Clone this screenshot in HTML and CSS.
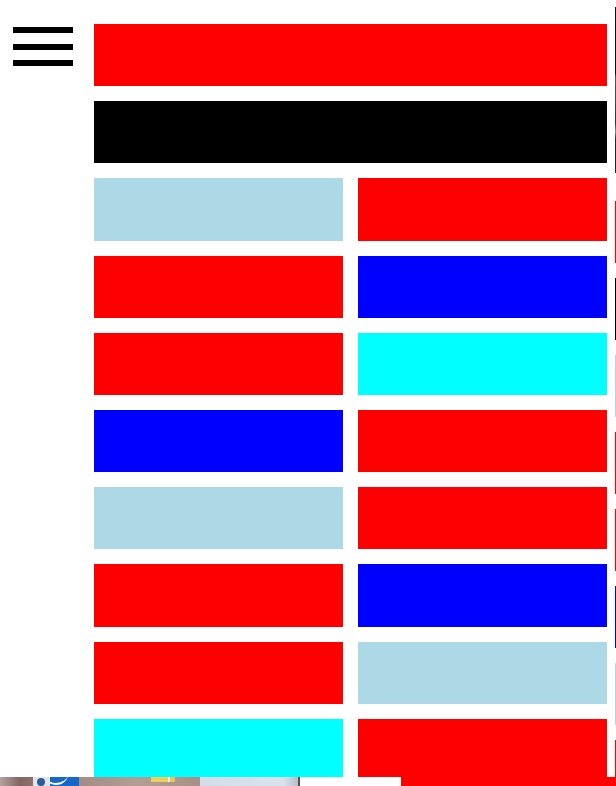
FILE: index.html
```html
<!DOCTYPE html>
<html lang="en">
<head>
    <meta charset="UTF-8">
    <meta name="viewport" content="width=device-width, initial-scale=1.0">
    <title>Blocks</title>
    <link rel="stylesheet" href="styles.css">
</head>
<body>
    <nav class="side">
        <div class="burger">
            <span></span>
            <span></span>
            <span></span>
        </div>
    </nav>

    <main class="content">
        <div class="block red"></div>
        <div class="block black"></div>
        <div class="grid">
            <div class="block lightblue"></div>
            <div class="block red"></div>
            <div class="block red"></div>
            <div class="block blue"></div>
            <div class="block red"></div>
            <div class="block cyan"></div>
            <div class="block blue"></div>
            <div class="block red"></div>
            <div class="block lightblue"></div>
            <div class="block red"></div>
            <div class="block red"></div>
            <div class="block blue"></div>
            <div class="block red"></div>
            <div class="block lightblue"></div>
            <div class="block cyan"></div>
            <div class="block red"></div>
        </div>
    </main>

    <div class="sliver">
        <div class="sliver-top"></div>
        <div class="sliver-list">
            <div class="bit red"></div>
            <div class="bit black"></div>
            <div class="bit lightblue"></div>
            <div class="bit red"></div>
            <div class="bit red"></div>
            <div class="bit blue"></div>
            <div class="bit lightblue"></div>
            <div class="bit red"></div>
        </div>
    </div>

    <div class="taskbar">
        <div class="tb-photo"></div>
        <div class="tb-icon"><span class="tb-icon-mark"></span></div>
        <div class="tb-blue"><span class="tb-curve"></span></div>
        <div class="tb-folder"><span class="tb-yellow"></span></div>
        <div class="tb-window"></div>
        <div class="tb-blank"></div>
        <div class="tb-red"></div>
    </div>
</body>
</html>
```

FILE: styles.css
```css
html, body {
    margin: 0;
    height: 100%;
}

body {
    display: flex;
    background-color: white;
    overflow: hidden;
    font-family: "Liberation Sans", Arial, sans-serif;
}

.side {
    width: 94px;
    flex-shrink: 0;
}

.burger {
    display: flex;
    flex-direction: column;
    gap: 10.5px;
    margin: 27px 0 0 13px;
    width: 60px;
}

.burger span {
    display: block;
    height: 6px;
    background-color: black;
}

.content {
    width: 513px;
    flex-shrink: 0;
    padding-top: 24px;
    display: flex;
    flex-direction: column;
    gap: 15px;
}

.grid {
    display: grid;
    grid-template-columns: 249px 249px;
    column-gap: 15px;
    row-gap: 15px;
}

.block {
    height: 62.2px;
}

.red { background-color: red; }
.black { background-color: black; }
.blue { background-color: blue; }
.cyan { background-color: cyan; }
.lightblue { background-color: lightblue; }

.sliver {
    width: 1px;
    margin-left: 8px;
    flex-shrink: 0;
}

.sliver-top {
    margin-top: 7px;
    height: 166px;
    background: linear-gradient(#111 0%, #111 40%, #555 42%, #333 70%, #888 75%, #222 80%, #222 100%);
}

.sliver-list {
    margin-top: 28px;
    display: flex;
    flex-direction: column;
    gap: 15px;
}

.bit {
    height: 62px;
}

.taskbar {
    position: fixed;
    left: 0;
    right: 0;
    bottom: 0;
    height: 9px;
    display: flex;
}

.tb-photo {
    width: 33px;
    background: linear-gradient(90deg, #b4a3a0, #806563 60%, #8c716c);
}

.tb-icon {
    width: 17px;
    background-color: #e4e6ea;
    position: relative;
}

.tb-icon-mark {
    position: absolute;
    left: 4px;
    top: 1px;
    width: 8px;
    height: 8px;
    border-radius: 50%;
    background-color: #2d5c9c;
}

.tb-blue {
    width: 29px;
    background-color: #1767c9;
    position: relative;
    overflow: hidden;
}

.tb-curve {
    position: absolute;
    left: -6px;
    top: -14px;
    width: 24px;
    height: 20px;
    border-radius: 50%;
    border-bottom: 2px solid white;
}

.tb-folder {
    width: 121px;
    background: linear-gradient(90deg, #a38c86, #b49e94 50%, #a99087);
    position: relative;
}

.tb-yellow {
    position: absolute;
    left: 72px;
    top: 0;
    width: 24px;
    height: 5px;
    background: linear-gradient(90deg, #f3cf5a 70%, #eee 70%, #eee 80%, #e8c45a 80%);
}

.tb-window {
    width: 98px;
    background: linear-gradient(90deg, #d4dcea, #dbe2ee 85%, #b9bfc8);
    border-right: 2px solid #555;
}

.tb-blank {
    width: 101px;
    background-color: white;
}

.tb-red {
    flex: 1;
    background-color: red;
}
```
